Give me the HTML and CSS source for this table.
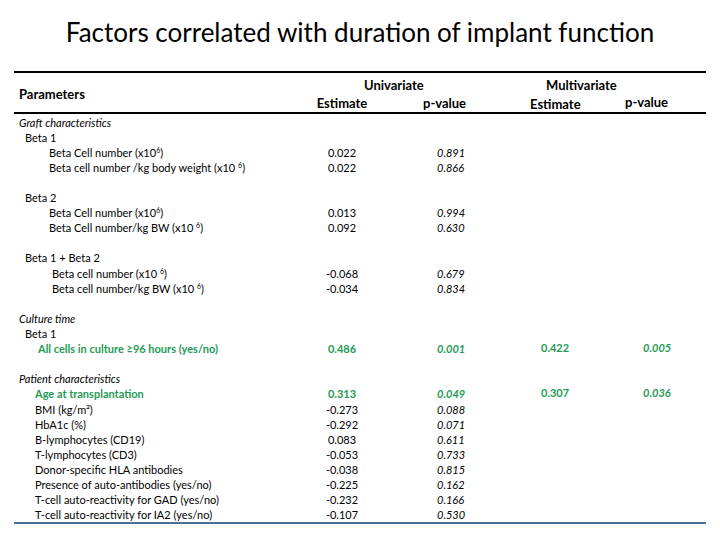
FILE: index.html
```html
<!DOCTYPE html>
<html>
<head>
<meta charset="utf-8">
<link rel="stylesheet" href="styles.css">
</head>
<body>
<div class="slide">
  <h1 class="title">Factors correlated with duration of implant function</h1>
  <div class="table">
    <div class="head">
      <div class="h-param">Parameters</div>
      <div class="h-uni">Univariate</div>
      <div class="h-multi">Multivariate</div>
      <div class="h-est">Estimate</div>
      <div class="h-p">p-value</div>
      <div class="h-mest">Estimate</div>
      <div class="h-mp">p-value</div>
    </div>
    <div class="body">
      <div class="row"><div class="lbl l0 it">Graft characteristics</div></div>
      <div class="row"><div class="lbl l1">Beta 1</div></div>
      <div class="row"><div class="lbl l2">Beta Cell number (x10<sup class="sup">6</sup>)</div><div class="est">0.022</div><div class="pv">0.891</div></div>
      <div class="row"><div class="lbl l2">Beta cell number /kg body weight (x10 <sup class="sup">6</sup>)</div><div class="est">0.022</div><div class="pv">0.866</div></div>
      <div class="row blank"></div>
      <div class="row"><div class="lbl l1">Beta 2</div></div>
      <div class="row"><div class="lbl l2">Beta Cell number (x10<sup class="sup">6</sup>)</div><div class="est">0.013</div><div class="pv">0.994</div></div>
      <div class="row"><div class="lbl l2">Beta Cell number/kg BW (x10 <sup class="sup">6</sup>)</div><div class="est">0.092</div><div class="pv">0.630</div></div>
      <div class="row blank"></div>
      <div class="row"><div class="lbl l1">Beta 1 + Beta 2</div></div>
      <div class="row"><div class="lbl l2b">Beta cell number (x10 <sup class="sup">6</sup>)</div><div class="est">-0.068</div><div class="pv">0.679</div></div>
      <div class="row"><div class="lbl l2b">Beta cell number/kg BW (x10 <sup class="sup">6</sup>)</div><div class="est">-0.034</div><div class="pv">0.834</div></div>
      <div class="row blank"></div>
      <div class="row"><div class="lbl l0 it">Culture time</div></div>
      <div class="row"><div class="lbl l1">Beta 1</div></div>
      <div class="row sig"><div class="lbl lg">All cells in culture ≥96 hours (yes/no)</div><div class="est">0.486</div><div class="pv">0.001</div><div class="mest">0.422</div><div class="mpv">0.005</div></div>
      <div class="row blank"></div>
      <div class="row"><div class="lbl l0 it">Patient characteristics</div></div>
      <div class="row sig"><div class="lbl la">Age at transplantation</div><div class="est">0.313</div><div class="pv">0.049</div><div class="mest">0.307</div><div class="mpv">0.036</div></div>
      <div class="row"><div class="lbl la">BMI (kg/m²)</div><div class="est">-0.273</div><div class="pv">0.088</div></div>
      <div class="row"><div class="lbl la">HbA1c (%)</div><div class="est">-0.292</div><div class="pv">0.071</div></div>
      <div class="row"><div class="lbl la">B-lymphocytes (CD19)</div><div class="est">0.083</div><div class="pv">0.611</div></div>
      <div class="row"><div class="lbl la">T-lymphocytes (CD3)</div><div class="est">-0.053</div><div class="pv">0.733</div></div>
      <div class="row"><div class="lbl la">Donor-specific HLA antibodies</div><div class="est">-0.038</div><div class="pv">0.815</div></div>
      <div class="row"><div class="lbl la">Presence of auto-antibodies (yes/no)</div><div class="est">-0.225</div><div class="pv">0.162</div></div>
      <div class="row"><div class="lbl la">T-cell auto-reactivity for GAD (yes/no)</div><div class="est">-0.232</div><div class="pv">0.166</div></div>
      <div class="row"><div class="lbl la">T-cell auto-reactivity for IA2 (yes/no)</div><div class="est">-0.107</div><div class="pv">0.530</div></div>
    </div>
  </div>
</div>
</body>
</html>
```

FILE: styles.css
```css
html, body {
  margin: 0;
  padding: 0;
  background: #ffffff;
}

body {
  font-family: Lato, "Open Sans", "Liberation Sans", sans-serif;
  color: #000000;
}

.slide {
  width: 720px;
  height: 540px;
  padding: 0 14px;
  box-sizing: border-box;
}

.title {
  margin: 0;
  padding-top: 16px;
  height: 55px;
  box-sizing: border-box;
  font-size: 26px;
  line-height: 32px;
  font-weight: normal;
  text-align: center;
  white-space: nowrap;
}

.table {
  width: 692px;
}

.head {
  display: grid;
  grid-template-columns: 296px 64px 136px 110px 86px;
  grid-template-rows: 18px 18px;
  border-top: 2px solid #000000;
  border-bottom: 2px solid #000000;
  padding-top: 3px;
  margin-top: 16px;
  font-weight: bold;
  font-size: 13px;
  line-height: 18px;
  white-space: nowrap;
}

.h-param {
  grid-column: 1;
  grid-row: 1 / 3;
  align-self: center;
  padding-left: 5px;
  padding-bottom: 1px;
}

.h-uni {
  grid-column: 2 / 4;
  grid-row: 1;
  padding-left: 54px;
}

.h-multi {
  grid-column: 4 / 6;
  grid-row: 1;
  padding-left: 36px;
}

.h-est {
  grid-column: 2;
  grid-row: 2;
  text-align: center;
}

.h-p {
  grid-column: 3;
  grid-row: 2;
  padding-left: 49px;
}

.h-mest {
  grid-column: 4;
  grid-row: 2;
  padding-left: 20px;
  padding-top: 1px;
}

.h-mp {
  grid-column: 5;
  grid-row: 2;
  padding-left: 5px;
  margin-top: -1px;
}

.body {
  padding-top: 0.5px;
  border-bottom: 2px solid #4a7099;
  font-size: 11px;
}

.row {
  display: grid;
  grid-template-columns: 296px 64px 167px 102px 63px;
  height: 15.12px;
  line-height: 15.12px;
  white-space: nowrap;
}

.lbl {
  grid-column: 1;
}

.l0 { padding-left: 5px; }
.l1 { padding-left: 11px; }
.l2 { padding-left: 35px; }
.l2b { padding-left: 38px; }
.lg { padding-left: 24px; }
.la { padding-left: 21px; }

.it {
  font-style: italic;
}

.est {
  grid-column: 2;
  text-align: center;
}

.pv {
  grid-column: 3;
  padding-left: 63px;
  font-style: italic;
}

.mest {
  grid-column: 4;
  margin-top: -1px;
}

.mpv {
  grid-column: 5;
  font-style: italic;
  margin-top: -1px;
}

.sig {
  color: #249a55;
  font-weight: bold;
}

.sup {
  font-size: 7px;
  line-height: 0;
  vertical-align: 4px;
}
```
